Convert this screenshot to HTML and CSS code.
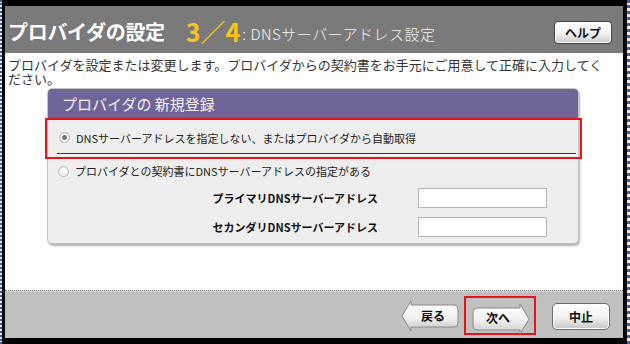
FILE: index.html
```html
<!DOCTYPE html>
<html lang="ja">
<head>
    <meta charset="UTF-8">
    <title>プロバイダの設定</title>
    <link rel="stylesheet" href="styles.css">
</head>
<body>
    <div class="screen">
        <div class="window">
            <div class="titlebar">
                <span class="title">プロバイダの設定</span>
                <span class="step">3／4</span>
                <span class="subtitle">: DNSサーバーアドレス設定</span>
                <button class="help-button">ヘルプ</button>
            </div>

            <div class="content">
                <p class="intro">プロバイダを設定または変更します。プロバイダからの契約書をお手元にご用意して正確に入力してください。</p>

                <div class="panel">
                    <div class="panel-header">プロバイダの 新規登録</div>
                    <div class="panel-body">
                        <div class="option option-selected">
                            <span class="radio checked"></span>
                            <span>DNSサーバーアドレスを指定しない、またはプロバイダから自動取得</span>
                        </div>
                        <div class="option">
                            <span class="radio"></span>
                            <span>プロバイダとの契約書にDNSサーバーアドレスの指定がある</span>
                        </div>
                        <div class="field">
                            <label class="field-label">プライマリDNSサーバーアドレス</label>
                            <input type="text" class="field-input">
                        </div>
                        <div class="field">
                            <label class="field-label">セカンダリDNSサーバーアドレス</label>
                            <input type="text" class="field-input">
                        </div>
                    </div>
                </div>
            </div>

            <div class="footer">
                <button class="nav-button back">
                    <svg class="shape" width="58" height="32" viewBox="0 0 58 32">
                        <defs>
                            <linearGradient id="g1" x1="0" y1="0" x2="0" y2="1">
                                <stop offset="0" stop-color="#ffffff"/>
                                <stop offset="0.55" stop-color="#f0f0f0"/>
                                <stop offset="1" stop-color="#c8c8c8"/>
                            </linearGradient>
                        </defs>
                        <path d="M10 1 L10 5 L53 5 Q57 5 57 9 L57 23 Q57 27 53 27 L10 27 L10 31 L1 16 Z" fill="url(#g1)" stroke="#8a8a8a" stroke-width="1"/>
                    </svg>
                    <span class="label">戻る</span>
                </button>
                <div class="highlight">
                    <button class="nav-button next">
                        <svg class="shape" width="58" height="32" viewBox="0 0 58 32">
                            <defs>
                                <linearGradient id="g2" x1="0" y1="0" x2="0" y2="1">
                                    <stop offset="0" stop-color="#ffffff"/>
                                    <stop offset="0.55" stop-color="#f0f0f0"/>
                                    <stop offset="1" stop-color="#c8c8c8"/>
                                </linearGradient>
                            </defs>
                            <path d="M48 1 L48 5 L5 5 Q1 5 1 9 L1 23 Q1 27 5 27 L48 27 L48 31 L57 16 Z" fill="url(#g2)" stroke="#8a8a8a" stroke-width="1"/>
                        </svg>
                        <span class="label">次へ</span>
                    </button>
                </div>
                <button class="cancel-button">中止</button>
            </div>
        </div>
    </div>
</body>
</html>
```

FILE: styles.css
```css
* {
    margin: 0;
    padding: 0;
    box-sizing: border-box;
    font-family: "Noto Sans CJK JP", "Noto Sans", sans-serif;
}

body {
    width: 630px;
    height: 344px;
    overflow: hidden;
    background: #e8ecf4;
}

.screen {
    height: 344px;
    border-left: 2px dotted #3c5fa6;
    border-right: 3px dotted #3c5fa6;
}

.window {
    height: 344px;
    display: flex;
    flex-direction: column;
    border-style: solid;
    border-color: #000;
    border-width: 6px 4px 6px 3px;
    background: #fff;
}

.titlebar {
    height: 47px;
    flex-shrink: 0;
    background: #7a7a7a;
    display: flex;
    align-items: center;
    padding: 4px 11px 0 3px;
    color: #fff;
    white-space: nowrap;
}

.title {
    font-size: 20px;
    font-weight: 700;
    letter-spacing: -0.3px;
}

.step {
    color: #f8c31c;
    font-size: 25px;
    font-weight: 700;
    margin-left: 21px;
    margin-top: -2px;
}

.subtitle {
    font-size: 15px;
    font-weight: 300;
    margin-left: 2px;
    margin-top: 4px;
    color: #f4f4f4;
    letter-spacing: 0.5px;
}

.help-button {
    margin-left: auto;
    width: 58px;
    height: 23px;
    margin-top: 2px;
    border: 1px solid #444;
    border-radius: 4px;
    background: linear-gradient(#ffffff, #f2f2f2 55%, #c9c9c9);
    box-shadow: inset 0 0 0 1px #fff;
    font-size: 12px;
    font-weight: 700;
    color: #111;
}

.content {
    flex: 1;
    background: #fff;
    border-bottom: 1px dotted #6a6a6a;
    padding: 5px 0 0 3px;
}

.intro {
    width: 606px;
    font-size: 13px;
    line-height: 14px;
    color: #333;
}

.panel {
    width: 532px;
    margin: 2px 0 0 39px;
    border-radius: 5px;
    background: #eeeeee;
    border: 1px solid #c4c4c4;
    box-shadow: 1px 2px 2px rgba(0, 0, 0, 0.3);
}

.panel-header {
    height: 30px;
    background: #6f6598;
    border-radius: 4px 4px 0 0;
    color: #f2f2f2;
    font-size: 15px;
    line-height: 30px;
    padding-left: 14px;
}

.panel-body {
    padding-bottom: 2px;
}

.option {
    display: flex;
    align-items: center;
    gap: 6px;
    padding-left: 10px;
    font-size: 11px;
    color: #222;
    height: 24px;
}

.option-selected {
    height: 41px;
    margin: -1px -4px 0 -3px;
    padding-left: 12px;
    padding-bottom: 2px;
    border: 2px solid #e8141c;
    position: relative;
}

.option-selected::after {
    content: "";
    position: absolute;
    left: 10px;
    right: 4px;
    bottom: 3px;
    height: 1px;
    background: #333;
    box-shadow: 0 1px 0 #fff;
}

.radio {
    width: 11px;
    height: 11px;
    border-radius: 50%;
    border: 1px solid #b8b8b8;
    background: radial-gradient(circle, #fafafa 40%, #dedede);
    flex-shrink: 0;
    display: flex;
    align-items: center;
    justify-content: center;
}

.radio.checked::before {
    content: "";
    width: 5px;
    height: 5px;
    border-radius: 50%;
    background: #7a7a7a;
}

.field {
    display: flex;
    align-items: center;
    height: 29px;
}

.field-label {
    width: 330px;
    text-align: right;
    font-size: 11px;
    font-weight: 700;
    color: #111;
}

.field-input {
    width: 129px;
    height: 20px;
    margin-left: 40px;
    border: 1px solid #b4b4b4;
    background: #fff;
}

.footer {
    height: 47px;
    flex-shrink: 0;
    background: #c0c0c0;
    border-top: 1px solid #d2d2d2;
    display: flex;
    align-items: center;
    justify-content: flex-end;
    padding-right: 13px;
}

.nav-button {
    position: relative;
    width: 58px;
    height: 32px;
    border: none;
    background: none;
    font-size: 12px;
    font-weight: 700;
    color: #111;
    margin-top: 2px;
}

.nav-button .shape {
    position: absolute;
    left: 0;
    top: 0;
}

.nav-button .label {
    position: relative;
    top: -1px;
}

.back .label {
    left: 3px;
}

.next .label {
    left: -3px;
}

.highlight {
    margin-left: 5px;
    padding: 3px 4px 0 6px;
    height: 39px;
    border: 2px solid #e8141c;
}

.cancel-button {
    width: 58px;
    height: 27px;
    margin-left: 16px;
    margin-top: 2px;
    border: 1px solid #6a6a6a;
    border-radius: 5px;
    background: linear-gradient(#ffffff, #f0f0f0 55%, #c6c6c6);
    box-shadow: inset 0 0 0 1px #fff;
    font-size: 12px;
    font-weight: 700;
    color: #111;
}
```
